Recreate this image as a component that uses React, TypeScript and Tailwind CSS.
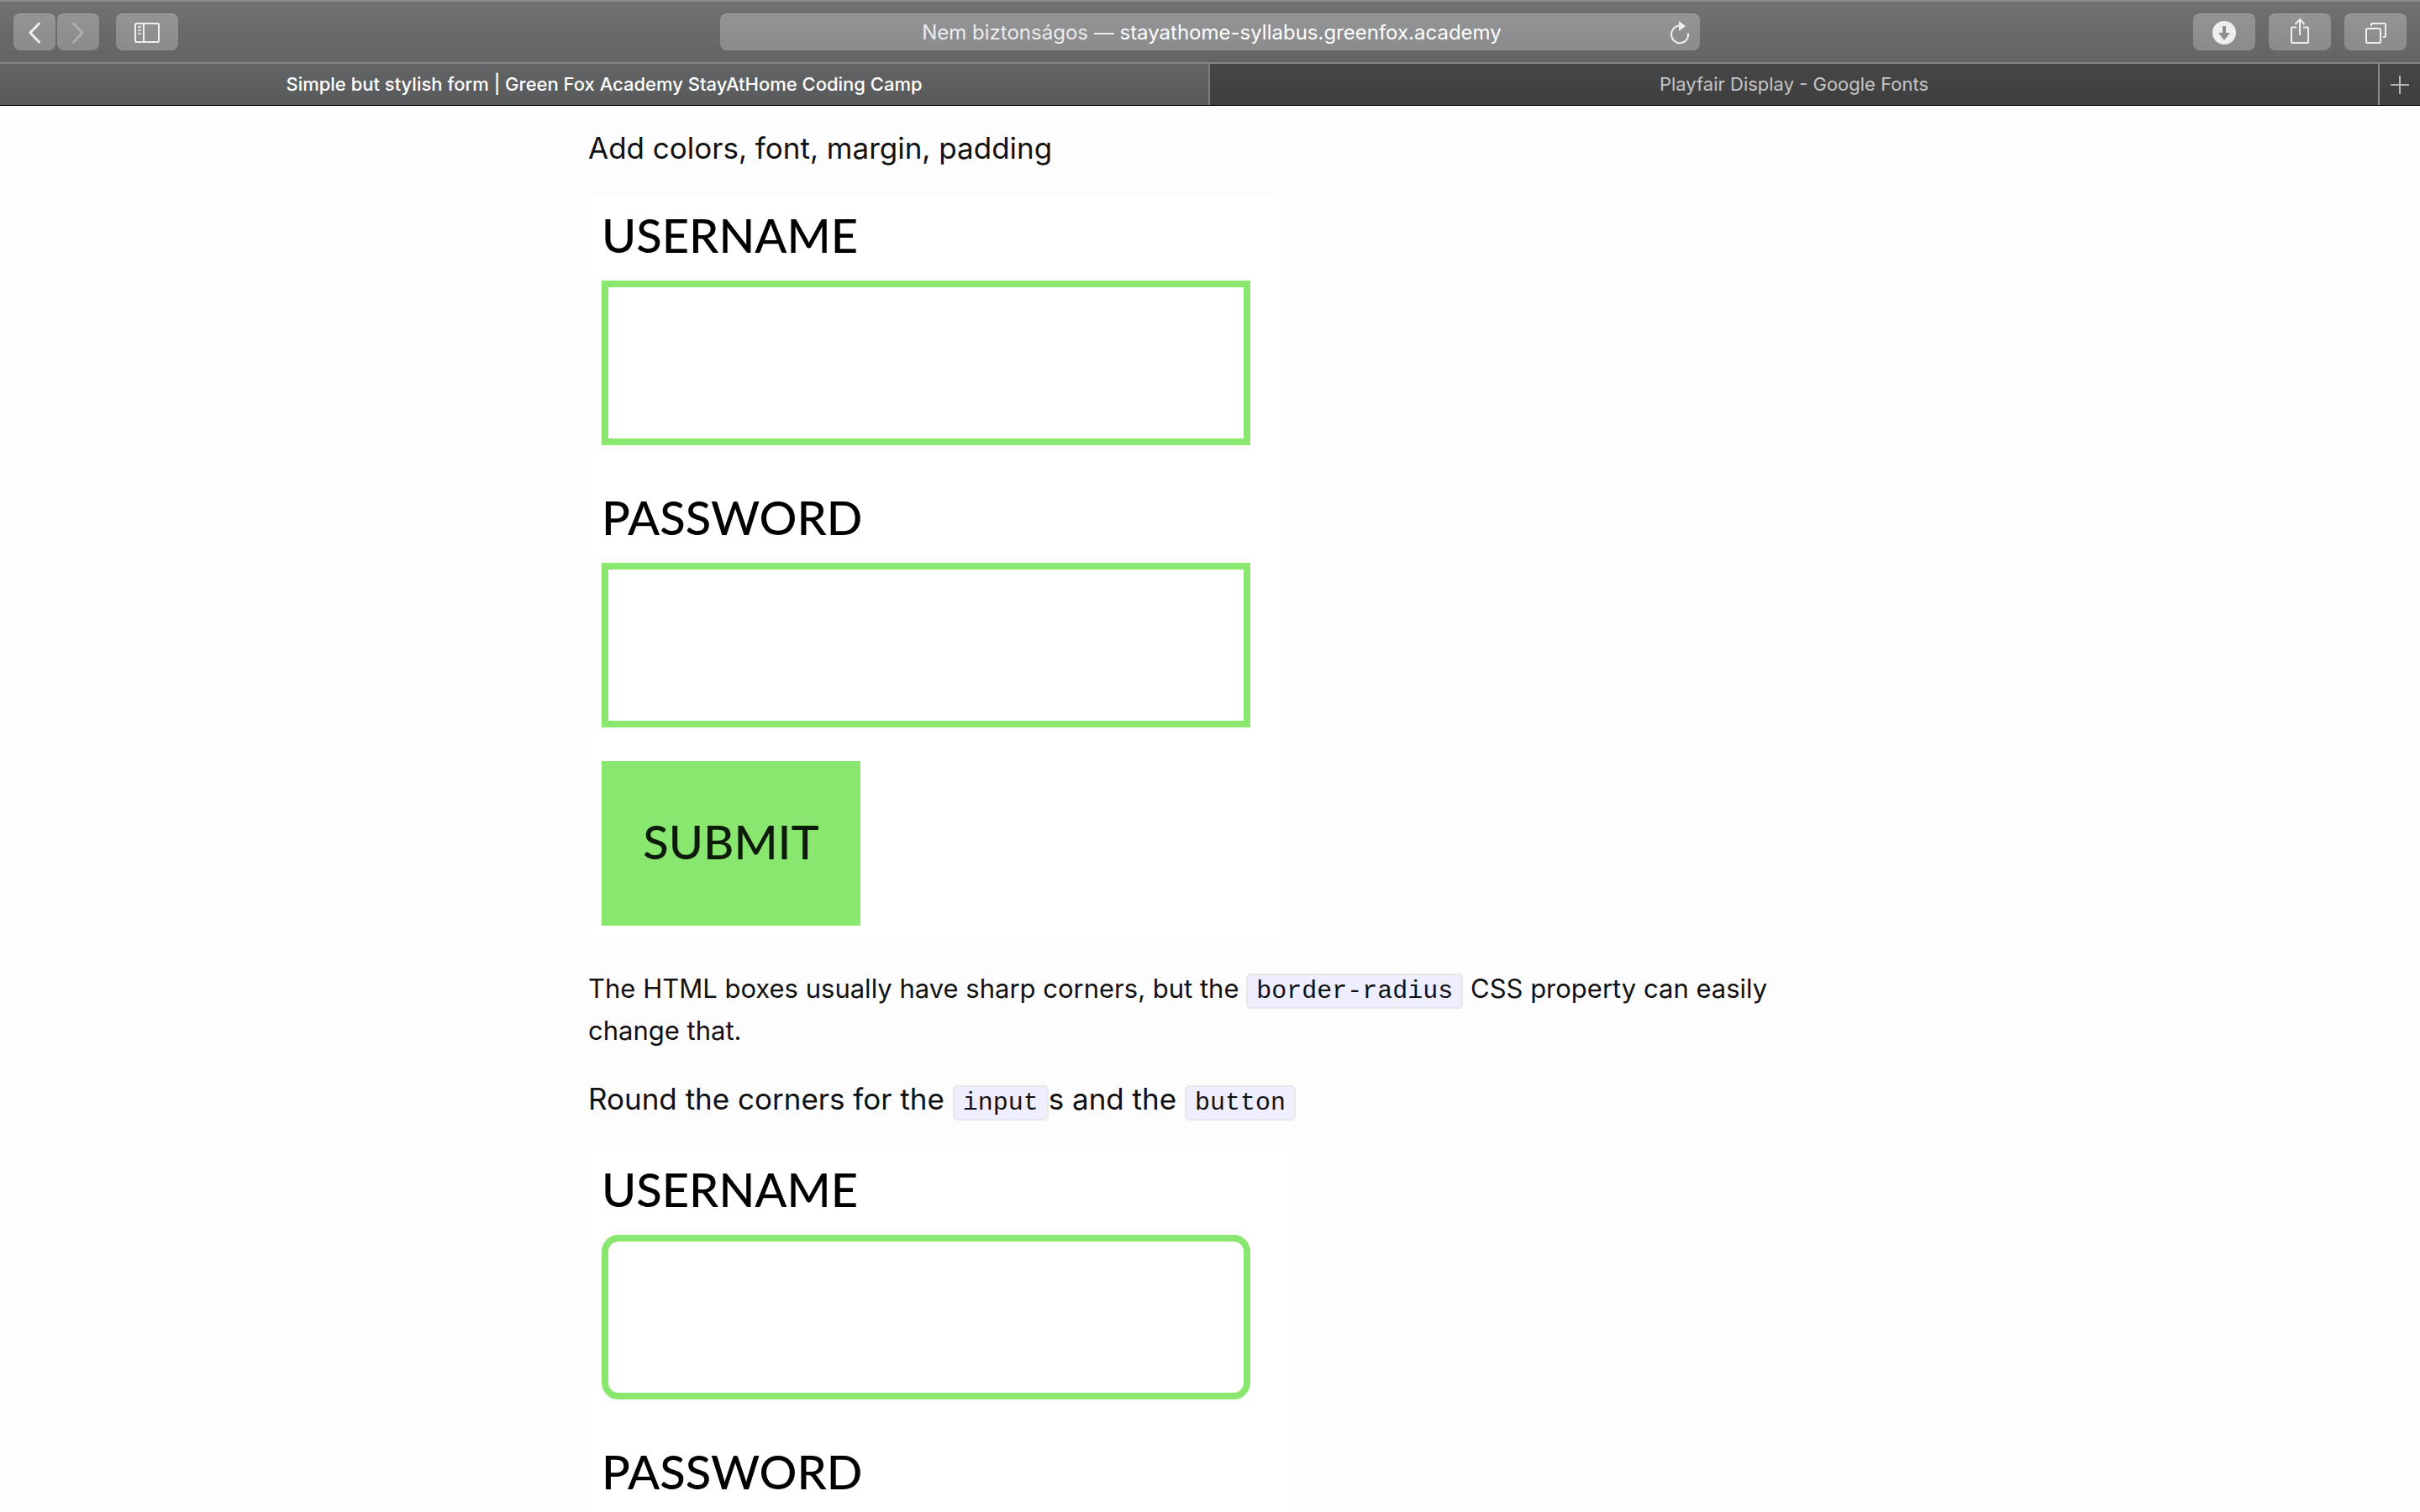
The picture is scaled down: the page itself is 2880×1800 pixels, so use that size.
import type { ReactNode } from 'react';
import clsx from 'clsx';

function ToolbarButton({ label, wide = false, children }: { label: string; wide?: boolean; children: ReactNode }) {
  return (
    <button
      type="button"
      aria-label={label}
      className={clsx(
        'flex h-11 items-center justify-center rounded-lg border-t border-[#a3a4a5] bg-linear-to-b from-[#939496] to-[#8b8b8c]',
        wide ? 'w-[74px]' : 'w-[50px]',
      )}
    >
      {children}
    </button>
  );
}

function BackIcon({ dim = false }: { dim?: boolean }) {
  return (
    <svg width="16" height="26" viewBox="0 0 16 26" fill="none" className={dim ? 'rotate-180 text-[#aeaeaf]' : 'text-[#efefef]'}>
      <path d="M13.5 2 3 13l10.5 11" stroke="currentColor" strokeWidth="3" strokeLinecap="round" strokeLinejoin="round" />
    </svg>
  );
}

function SidebarIcon() {
  return (
    <svg width="30" height="24" viewBox="0 0 30 24" fill="none" stroke="#efefef" strokeWidth="2">
      <rect x="1" y="1" width="28" height="22" rx="1.5" />
      <path d="M11 1v22" />
      <path d="M4 5h4M4 9h4M4 13h4" stroke="#dcdcdc" />
    </svg>
  );
}

function ReloadIcon() {
  return (
    <svg width="24" height="28" viewBox="0 0 24 28" fill="none">
      <path d="M22 14.6A10 10.4 0 1 1 12 5.6" stroke="#efefef" strokeWidth="2" />
      <path d="M11 0v12l8-6z" fill="#efefef" />
    </svg>
  );
}

function DownloadIcon() {
  return (
    <svg width="28" height="28" viewBox="0 0 28 28">
      <circle cx="14" cy="14" r="14" fill="#efefef" />
      <path d="M12 6h4v8h5l-7 9-7-9h5z" fill="#8e8f90" />
    </svg>
  );
}

function ShareIcon() {
  return (
    <svg width="24" height="32" viewBox="0 0 24 32" fill="none" stroke="#efefef" strokeWidth="2" className="-mt-1">
      <path d="M8 11.500H3a1 1 0 0 0-1 1V29a1 1 0 0 0 1 1h18a1 1 0 0 0 1-1V12.500a1 1 0 0 0-1-1h-5" />
      <path d="M12 21V2M6.500 8 12 2l5.500 6" />
    </svg>
  );
}

function TabsIcon() {
  return (
    <svg width="26" height="26" viewBox="0 0 26 26" fill="none" stroke="#efefef" strokeWidth="2">
      <rect x="2" y="8" width="17" height="17" rx="1.500" />
      <path d="M8 5V3a1 1 0 0 1 1-1h15a1 1 0 0 1 1 1v14a1 1 0 0 1-1 1h-2" />
    </svg>
  );
}

function BrowserToolbar() {
  return (
    <header className="grid h-[76px] shrink-0 grid-cols-[1fr_minmax(0,1166px)_1fr] items-center border-t-2 border-b-2 border-t-[#8a8b8d] border-b-[#858688] bg-linear-to-b from-[#707173] to-[#636466] px-4">
      <nav className="flex items-center" aria-label="Navigation">
        <div className="mr-5 flex gap-0.5">
          <ToolbarButton label="Back"><BackIcon /></ToolbarButton>
          <ToolbarButton label="Forward"><BackIcon dim /></ToolbarButton>
        </div>
        <ToolbarButton label="Show sidebar" wide><SidebarIcon /></ToolbarButton>
      </nav>
      <div className="flex h-11 items-center rounded-lg border-t border-[#a3a4a5] bg-linear-to-b from-[#939496] to-[#8b8b8c] px-3">
        <p className="flex-1 pl-7 text-center text-[24px] text-white">
          <span className="text-[#ececec]">Nem biztonságos — </span>stayathome-syllabus.greenfox.academy
        </p>
        <button type="button" aria-label="Reload"><ReloadIcon /></button>
      </div>
      <div className="flex justify-end gap-4">
        <ToolbarButton label="Downloads" wide><DownloadIcon /></ToolbarButton>
        <ToolbarButton label="Share" wide><ShareIcon /></ToolbarButton>
        <ToolbarButton label="Show all tabs" wide><TabsIcon /></ToolbarButton>
      </div>
    </header>
  );
}

function TabBar() {
  return (
    <div className="flex h-[50px] shrink-0 border-b border-black bg-linear-to-b from-[#454645] to-[#3f3f3f] text-[22px]">
      <button type="button" className="w-1/2 border-r-2 border-[#7c7d7e] bg-linear-to-b from-[#636466] to-[#58595a] font-medium text-white">
        Simple but stylish form | Green Fox Academy StayAtHome Coding Camp
      </button>
      <button type="button" className="flex-1 text-[#c4c4c4]">Playfair Display - Google Fonts</button>
      <button type="button" aria-label="New tab" className="flex w-[50px] items-center justify-center border-l-2 border-[#8a8b8b]">
        <svg width="22" height="22" viewBox="0 0 22 22" stroke="#b4b4b4" strokeWidth="2">
          <path d="M11 0v22M0 11h22" />
        </svg>
      </button>
    </div>
  );
}

function Code({ children }: { children: ReactNode }) {
  return (
    <code className="rounded-md border-2 border-[#e8e8e8] bg-[#eeeeff] px-2.5 py-0.5 font-['Liberation_Mono',monospace] text-[30px] leading-none">
      {children}
    </code>
  );
}

function Field({ id, label, type, rounded }: { id: string; label: string; type: string; rounded?: boolean }) {
  return (
    <div className="flex flex-col gap-[18px]">
      <label htmlFor={id} className="leading-[72px]">{label}</label>
      <input
        id={id}
        type={type}
        className={clsx('h-[196px] w-[772px] border-8 border-[#89e66f] bg-white px-6 outline-none', rounded && 'rounded-[20px]')}
      />
    </div>
  );
}

function FormExample({ name, rounded = false }: { name: string; rounded?: boolean }) {
  return (
    <form
      onSubmit={(e) => e.preventDefault()}
      className={clsx(
        "flex flex-col bg-white pb-5 pl-4 font-['Lato',sans-serif] text-[56px] font-medium text-black",
        rounded ? 'w-[840px] pt-3.5' : 'w-[824px] pt-2.5',
      )}
    >
      <div className="flex flex-col gap-[50px]">
        <Field id={`${name}-username`} label="USERNAME" type="text" rounded={rounded} />
        <Field id={`${name}-password`} label="PASSWORD" type="password" rounded={rounded} />
      </div>
      <button type="submit" className={clsx('mt-10 h-[196px] w-[308px] bg-[#89e66f] pb-1 text-[#0c1c08]', rounded && 'rounded-[20px]')}>
        SUBMIT
      </button>
    </form>
  );
}

export default function App() {
  return (
    <div className="flex h-screen flex-col overflow-hidden bg-[#fdfdfd] font-['Inter',sans-serif] text-[#111111]">
      <BrowserToolbar />
      <TabBar />
      <main className="min-h-0 flex-1 overflow-hidden">
        <article className="mx-auto max-w-[1480px] pt-[22px]">
          <h2 className="mb-[30px] text-[35px] leading-[56px]">Add colors, font, margin, padding</h2>
          <FormExample name="sharp" />
          <p className="mt-[30px] text-[31px] leading-[50px]">
            The HTML boxes usually have sharp corners, but the <Code>border-radius</Code> CSS property can easily change that.
          </p>
          <h2 className="mt-7 mb-[30px] text-[35px] leading-[56px]">
            Round the corners for the <Code>input</Code>s and the <Code>button</Code>
          </h2>
          <FormExample name="round" rounded />
        </article>
      </main>
    </div>
  );
}
